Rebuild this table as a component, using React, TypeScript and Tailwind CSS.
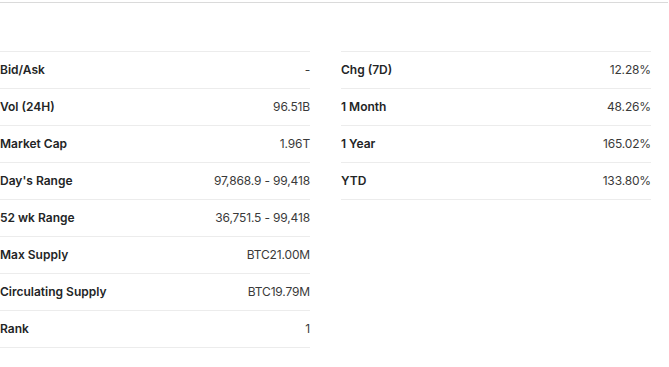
const left: [string, string][] = [
  ['Bid/Ask', '-'],
  ['Vol (24H)', '96.51B'],
  ['Market Cap', '1.96T'],
  ["Day's Range", '97,868.9 - 99,418'],
  ['52 wk Range', '36,751.5 - 99,418'],
  ['Max Supply', 'BTC21.00M'],
  ['Circulating Supply', 'BTC19.79M'],
  ['Rank', '1'],
];

const right: [string, string][] = [
  ['Chg (7D)', '12.28%'],
  ['1 Month', '48.26%'],
  ['1 Year', '165.02%'],
  ['YTD', '133.80%'],
];

function StatTable({ rows }: { rows: [string, string][] }) {
  return (
    <div className="w-[310px] border-t border-[#ececec]">
      {rows.map(([label, value]) => (
        <div
          key={label}
          className="flex h-[37px] items-center justify-between border-b border-[#ececec]"
        >
          <span className="text-[12px] font-semibold text-[#232526]">{label}</span>
          <span className="text-[12px] tracking-[-0.15px] text-[#3a3a3a]">{value}</span>
        </div>
      ))}
    </div>
  );
}

export default function App() {
  return (
    <div className="h-[367px] w-[669px] bg-white font-['Inter',sans-serif]">
      <div className="h-[3px] w-[668px] border-b border-[#dadada]" />
      <div className="flex gap-[31px] pt-[48px]">
        <StatTable rows={left} />
        <StatTable rows={right} />
      </div>
    </div>
  );
}
